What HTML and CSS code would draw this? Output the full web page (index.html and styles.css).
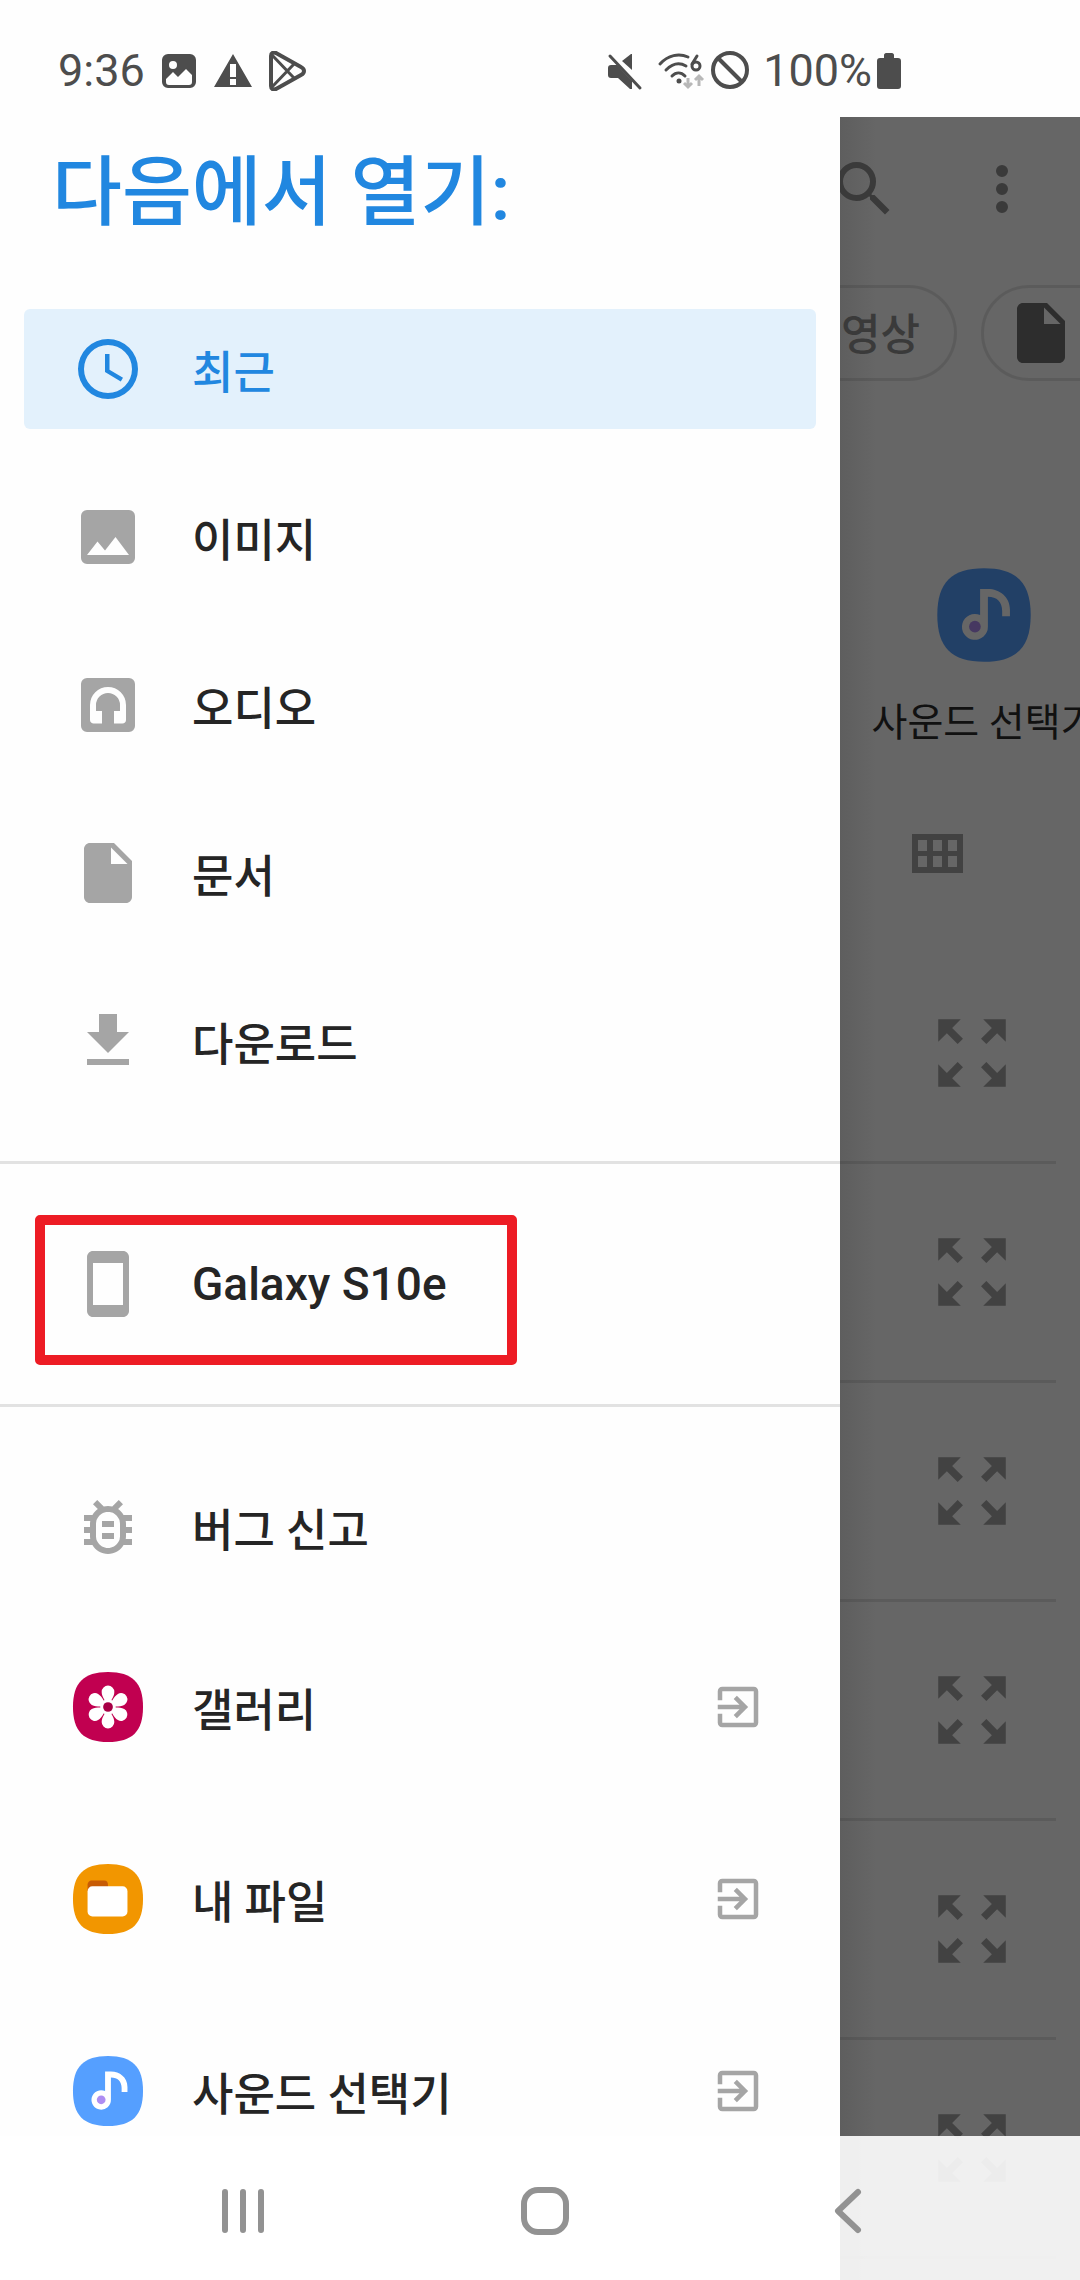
FILE: index.html
```html
<!DOCTYPE html>
<html lang="ko">
<head>
<meta charset="utf-8">
<meta name="viewport" content="width=device-width, initial-scale=1">
<title>다음에서 열기</title>
<link rel="stylesheet" href="styles.css">
</head>
<body>
<svg class="sprite" aria-hidden="true">
  <symbol id="i-doc" viewBox="0 0 24 24"><path d="M6 2c-1.100 0-2 .9-2 2v16c0 1.100.9 2 2 2h12c1.100 0 2-.9 2-2V8l-6-6H6zm7 7V3.500L18.500 9H13z"/></symbol>
  <symbol id="i-exit" viewBox="0 0 24 24"><path d="M10.090 15.590L11.500 17l5-5-5-5-1.410 1.410L12.670 11H3v2h9.670l-2.580 2.590zM19 3H5c-1.110 0-2 .9-2 2v4h2V5h14v14H5v-4H3v4c0 1.100.89 2 2 2h14c1.100 0 2-.9 2-2V5c0-1.100-.9-2-2-2z"/></symbol>
  <symbol id="i-expand" viewBox="0 0 24 24"><path d="M15 3l2.300 2.300-2.890 2.870 1.420 1.420L18.700 6.700 21 9V3zM3 9l2.300-2.300 2.870 2.890 1.420-1.420L6.700 5.300 9 3H3zm6 12l-2.300-2.300 2.890-2.870-1.420-1.420L5.300 17.300 3 15v6zm12-6l-2.300 2.300-2.870-2.890-1.420 1.420 2.890 2.870L15 21h6z"/></symbol>
  <symbol id="i-sound" viewBox="-1 -1 74 74">
    <path fill="#559fff" d="M36 0C61 0 72 11 72 36S61 72 36 72 0 61 0 36 11 0 36 0Z"/>
    <path fill="#fff" d="M33 16h6c9 0 17 6 17 16v5h-6v-4c0-7-4-11-11-11v23a10 10 0 1 1-6-9z"/>
    <circle cx="29" cy="45" r="4.500" fill="#ae8df2"/>
  </symbol>
</svg>

<header class="status">
  <div class="status-left">
    <time>9:36</time>
    <svg class="st-icon" viewBox="0 0 40 40"><path fill-rule="evenodd" d="M9 3h22a6 6 0 0 1 6 6v22a6 6 0 0 1-6 6H9a6 6 0 0 1-6-6V9a6 6 0 0 1 6-6zm5 7a4 4 0 1 0 0 8 4 4 0 0 0 0-8zM7 28v3a3 3 0 0 0 3 3h20a3 3 0 0 0 3-3v-7l-6-6-8 8-5-5z"/></svg>
    <svg class="st-icon" viewBox="0 0 40 40"><path fill-rule="evenodd" d="M20 3l19 33H1zM17 13v13h6V13zm0 15v6h6v-6z"/></svg>
    <svg class="st-icon" viewBox="0 0 40 40"><g fill="none" stroke="#4d4d4d" stroke-width="4" stroke-linejoin="round"><path d="M4 5v30c0 3 2 4 5 3l25-14c4-2 4-6 0-8L9 2C6 1 4 2 4 5z"/><path stroke-width="3" d="M5 4l22 23M5 36l22-23"/></g></svg>
  </div>
  <div class="status-right">
    <svg class="st-icon st-mute" viewBox="0 0 40 40"><path d="M28 3v16l-10-9 9-7z"/><path d="M6 5l30 32" fill="none" stroke="#fefefe" stroke-width="6"/><path d="M4 17c0-2 1-3 3-3h6l15 16v8h-2L14 27H7c-2 0-3-1-3-3z"/><path d="M6 5l30 32" fill="none" stroke="#4d4d4d" stroke-width="3" stroke-linecap="round"/></svg>
    <svg class="st-wifi" viewBox="0 0 48 40"><g fill="none" stroke="#4d4d4d" stroke-width="3" stroke-linecap="round"><path d="M3 13C11 4 22 2 31 6M9 19c6-6 13-8 20-4M15 25c4-4 9-4 13 0"/><path d="M40 5l-5 8"/><circle cx="39" cy="15" r="4"/></g><circle cx="22" cy="30" r="2.500"/><path d="M31 27v9m-4-4l4 4 4-4M42 35v-10m-4 4l4-4 4 4" fill="none" stroke="#b8b8b8" stroke-width="3"/></svg>
    <svg class="st-icon" viewBox="0 0 40 40"><g fill="none" stroke="#4d4d4d" stroke-width="4"><circle cx="20" cy="19" r="17"/><path d="M8 7l24 24"/></g></svg>
    <span class="battery-text">100%</span>
    <svg class="st-battery" viewBox="0 0 24 40"><path d="M7 4c0-1 1-2 2-2h6c1 0 2 1 2 2v3h4c2 0 3 1 3 3v25c0 2-1 3-3 3H3c-2 0-3-1-3-3V10c0-2 1-3 3-3h4z"/></svg>
  </div>
</header>

<div class="screen">
  <nav class="drawer">
    <h1>다음에서 열기:</h1>
    <ul>
      <li><a class="item active" href="#recent"><svg class="icon" viewBox="0 0 24 24"><path d="M12 2a10 10 0 1 0 0 20 10 10 0 0 0 0-20zm0 18a8 8 0 1 1 0-16 8 8 0 0 1 0 16zM12.500 7H11v6l5.250 3.150.75-1.230-4.500-2.670z"/></svg>최근</a></li>
      <li><a class="item" href="#images"><svg class="icon" viewBox="0 0 24 24"><path fill-rule="evenodd" d="M5 3h14a2 2 0 0 1 2 2v14a2 2 0 0 1-2 2H5a2 2 0 0 1-2-2V5a2 2 0 0 1 2-2zm0 15h14l-4.500-6-3.500 4.500-2.500-3z"/></svg>이미지</a></li>
      <li><a class="item" href="#audio"><svg class="icon" viewBox="0 0 24 24"><path fill-rule="evenodd" d="M5 3h14a2 2 0 0 1 2 2v14a2 2 0 0 1-2 2H5a2 2 0 0 1-2-2V5a2 2 0 0 1 2-2zm1 9v5c0 .7.600 1.200 1.200 1.200H10V14H8v-2a4 4 0 0 1 8 0v2h-2v4.200h2.800c.7 0 1.200-.5 1.200-1.200v-5a6 6 0 0 0-12 0z"/></svg>오디오</a></li>
      <li><a class="item" href="#documents"><svg class="icon"><use href="#i-doc"/></svg>문서</a></li>
      <li><a class="item" href="#downloads"><svg class="icon" viewBox="0 0 24 24"><path d="M19 9h-4V3H9v6H5l7 7 7-7zM5 18v2h14v-2H5z"/></svg>다운로드</a></li>
    </ul>
    <ul>
      <li class="marked"><a class="item device" href="#device"><svg class="icon" viewBox="0 0 24 24"><path d="M17 1.010L7 1c-1.100 0-1.990.9-1.990 2v18c0 1.100.89 2 1.990 2h10c1.100 0 2-.9 2-2V3c0-1.100-.9-1.990-2-1.990zM17 19H7V5h10v14z"/></svg>Galaxy S10e</a></li>
    </ul>
    <ul>
      <li><a class="item" href="#bug"><svg class="icon" viewBox="0 0 24 24"><path d="M20 8h-2.810c-.45-.78-1.070-1.450-1.820-1.960L17 4.410 15.590 3l-2.170 2.170C12.960 5.060 12.490 5 12 5s-.96.060-1.410.17L8.410 3 7 4.410l1.620 1.630C7.880 6.550 7.260 7.220 6.810 8H4v2h2.090c-.05.33-.09.66-.09 1v1H4v2h2v1c0 .34.040.67.090 1H4v2h2.810c1.040 1.790 2.970 3 5.190 3s4.150-1.210 5.190-3H20v-2h-2.090c.05-.33.090-.66.090-1v-1h2v-2h-2v-1c0-.34-.04-.67-.09-1H20V8zm-4 4v3c0 .22-.03.47-.07.7l-.1.650-.37.650c-.72 1.240-2.040 2-3.460 2s-2.740-.77-3.460-2l-.37-.64-.1-.65C8.030 15.480 8 15.230 8 15v-4c0-.23.030-.48.070-.7l.1-.65.370-.65c.3-.52.720-.97 1.210-1.310l.57-.39.740-.18c.31-.08.630-.12.940-.12.320 0 .63.040.950.12l.68.160.610.420c.5.340.91.780 1.210 1.310l.38.650.1.650c.04.220.070.470.070.690v1zm-6 2h4v2h-4v-2zm0-4h4v2h-4v-2z"/></svg>버그 신고</a></li>
      <li><a class="item app" href="#gallery"><svg class="icon" viewBox="-1 -1 74 74"><path fill="#c10050" d="M36 0C61 0 72 11 72 36S61 72 36 72 0 61 0 36 11 0 36 0Z"/><g fill="#fff"><path id="petal" d="M36 36C34 30 29.500 26 29.500 20.500a6.500 6.500 0 0 1 13 0C42.500 26 38 30 36 36z"/><use href="#petal" transform="rotate(60 36 36)"/><use href="#petal" transform="rotate(120 36 36)"/><use href="#petal" transform="rotate(180 36 36)"/><use href="#petal" transform="rotate(240 36 36)"/><use href="#petal" transform="rotate(300 36 36)"/><circle cx="36" cy="36" r="8"/></g><circle cx="36" cy="36" r="5" fill="#a80046"/></svg><span>갤러리</span><svg class="exit"><use href="#i-exit"/></svg></a></li>
      <li><a class="item app" href="#files"><svg class="icon" viewBox="-1 -1 74 74"><path fill="#f29600" d="M36 0C61 0 72 11 72 36S61 72 36 72 0 61 0 36 11 0 36 0Z"/><path fill="#c75b05" d="M19 17h13c3 0 4 2 4 5v6H15v-7c0-2 2-4 4-4z"/><rect x="15" y="23" width="41" height="31" rx="5" fill="#fff"/></svg><span>내 파일</span><svg class="exit"><use href="#i-exit"/></svg></a></li>
      <li><a class="item app" href="#sound"><svg class="icon"><use href="#i-sound"/></svg><span>사운드 선택기</span><svg class="exit"><use href="#i-exit"/></svg></a></li>
    </ul>
  </nav>

  <main class="behind">
    <div class="toolbar">
      <button type="button" aria-label="검색"><svg class="icon" viewBox="0 0 24 24"><path d="M15.500 14h-.79l-.28-.27A6.470 6.470 0 0 0 16 9.500 6.500 6.500 0 1 0 9.500 16c1.610 0 3.090-.59 4.230-1.570l.27.280v.79l5 4.990L20.490 19l-4.990-5zm-6 0a4.500 4.500 0 1 1 0-9 4.500 4.500 0 0 1 0 9z"/></svg></button>
      <button type="button" aria-label="옵션 더보기"><svg class="icon" viewBox="0 0 24 24"><path d="M12 8a2 2 0 1 0 0-4 2 2 0 0 0 0 4zm0 2a2 2 0 1 0 0 4 2 2 0 0 0 0-4zm0 6a2 2 0 1 0 0 4 2 2 0 0 0 0-4z"/></svg></button>
    </div>
    <div class="chips">
      <button class="chip" type="button">영상</button>
      <button class="chip chip-doc" type="button" aria-label="문서"><svg class="icon"><use href="#i-doc"/></svg></button>
    </div>
    <a class="picker" href="#sound"><svg class="picker-icon"><use href="#i-sound"/></svg><span>사운드 선택기</span></a>
    <div class="viewbar">
      <button type="button" aria-label="격자 보기"><svg class="grid-icon" viewBox="0 0 51 39"><path fill-rule="evenodd" d="M0 0h51v39H0zM6 6v11h9V6zm15 0v11h9V6zm15 0v11h9V6zM6 22v11h9V22zm15 0v11h9V22zm15 0v11h9V22z"/></svg></button>
    </div>
    <ul class="files">
      <li><button type="button" aria-label="미리보기"><svg class="expand"><use href="#i-expand"/></svg></button></li>
      <li><button type="button" aria-label="미리보기"><svg class="expand"><use href="#i-expand"/></svg></button></li>
      <li><button type="button" aria-label="미리보기"><svg class="expand"><use href="#i-expand"/></svg></button></li>
      <li><button type="button" aria-label="미리보기"><svg class="expand"><use href="#i-expand"/></svg></button></li>
      <li><button type="button" aria-label="미리보기"><svg class="expand"><use href="#i-expand"/></svg></button></li>
      <li><button type="button" aria-label="미리보기"><svg class="expand"><use href="#i-expand"/></svg></button></li>
    </ul>
  </main>
</div>

<footer class="sysnav">
  <button type="button" aria-label="최근 앱"><svg viewBox="0 0 48 48"><path d="M6 5v38M24 5v38M42 5v38"/></svg></button>
  <button type="button" aria-label="홈"><svg viewBox="0 0 48 48"><rect x="3" y="3" width="42" height="42" rx="14"/></svg></button>
  <button type="button" aria-label="뒤로"><svg viewBox="0 0 48 48"><path d="M35 5L15 24l20 19"/></svg></button>
</footer>
</body>
</html>
```
FILE: styles.css
```css
*, *::after { box-sizing: border-box; }

body {
  position: relative;
  display: flex;
  flex-direction: column;
  height: 100vh;
  margin: 0;
  overflow: hidden;
  background: #fefefe;
  color: #252525;
  font-family: Roboto, "Noto Sans CJK KR", sans-serif;
  font-size: 45px;
}

svg { display: block; fill: currentColor; flex: none; }
.sprite { position: absolute; width: 0; height: 0; }
ul { list-style: none; margin: 0; padding: 0; }
a { color: inherit; text-decoration: none; }
button { display: block; margin: 0; padding: 0; border: 0; background: none; color: inherit; font: inherit; }

/* Status bar */
.status {
  display: flex;
  flex: none;
  justify-content: space-between;
  height: 117px;
  padding: 24px 179px 0 58px;
  color: #4d4d4d;
}
.status-left, .status-right { display: flex; align-items: center; }
.status-left { gap: 14px; }
.status-right { gap: 5px; }
.st-icon { width: 40px; height: 40px; }
.st-mute { margin-right: 8px; }
.st-wifi { width: 48px; height: 40px; }
.st-battery { width: 24px; height: 40px; }
.battery-text { margin-left: 8px; }

/* Drawer beside the dimmed page */
.screen {
  display: grid;
  grid-template-columns: 1fr 240px;
  flex: 1;
  min-height: 0;
}
.drawer, .behind { min-width: 0; overflow: hidden; }

h1 {
  height: 168px;
  margin: 0;
  padding: 22px 52px 0;
  color: #2187e0;
  font-size: 76px;
  font-weight: 500;
  line-height: 108px;
}
.drawer ul + ul {
  margin-top: 36px;
  padding-top: 36px;
  border-top: 3px solid #e2e2e2;
}
.drawer li { padding: 24px; }
.item {
  display: flex;
  align-items: center;
  gap: 48px;
  height: 120px;
  padding: 0 48px;
  border-radius: 6px;
  font-weight: 500;
}
.item.app { height: 144px; padding-right: 51px; }
.item.device { font-size: 46px; }
.item span { flex: 1; }
.icon { width: 72px; height: 72px; }
.item .icon, .exit { color: #a5a5a5; }
.exit { width: 54px; height: 54px; }
.item.active { background: #e3f1fc; color: #2187e0; }
.item.active .icon { color: #2187e0; }

.marked { position: relative; }
.marked::after {
  content: "";
  position: absolute;
  top: 15px;
  left: 35px;
  width: 482px;
  height: 150px;
  border: 10px solid #ed1c24;
  border-radius: 5px;
}

/* Dimmed page */
.behind {
  background: linear-gradient(to right, #5e5e5e, #666 36px);
  color: #3a3a3a;
}
.toolbar {
  display: flex;
  justify-content: flex-end;
  gap: 66px;
  padding: 36px 42px;
}
.chips {
  display: flex;
  gap: 24px;
  margin-top: 24px;
}
.chip {
  flex: none;
  height: 96px;
  border: 3px solid rgba(0, 0, 0, 0.1);
  border-radius: 48px;
  font-size: 43px;
  font-weight: 500;
}
.chip:first-child {
  width: 117px;
  padding: 0 33px 4px 0;
  border-left: 0;
  border-radius: 0 48px 48px 0;
}
.chip-doc { width: 240px; padding-left: 21px; color: #2d2d2d; }
.picker {
  display: flex;
  flex-direction: column;
  align-items: center;
  gap: 30px;
  width: 288px;
  margin-top: 186px;
  color: #111;
  font-size: 39px;
  line-height: 60px;
  white-space: nowrap;
}
.picker-icon { width: 96px; height: 96px; filter: brightness(0.4); }
.viewbar { padding: 81px 72px 72px; color: #424242; }
.grid-icon { width: 51px; height: 39px; }
.files { color: #424242; }
.files li {
  display: flex;
  align-items: center;
  height: 219px;
  margin-right: 24px;
  padding-left: 87px;
  border-bottom: 3px solid rgba(0, 0, 0, 0.1);
}
.expand { width: 90px; height: 90px; }

/* System navigation, translucent over the page */
.sysnav {
  position: absolute;
  right: 0;
  bottom: 0;
  left: 0;
  display: grid;
  grid-template-columns: repeat(3, 1fr);
  align-items: center;
  justify-items: center;
  height: 144px;
  padding: 6px 82px 0 92px;
  background: rgba(255, 255, 255, 0.9);
}
.sysnav svg {
  width: 48px;
  height: 48px;
  fill: none;
  stroke: #929292;
  stroke-width: 6;
  stroke-linecap: round;
  stroke-linejoin: round;
}
```
